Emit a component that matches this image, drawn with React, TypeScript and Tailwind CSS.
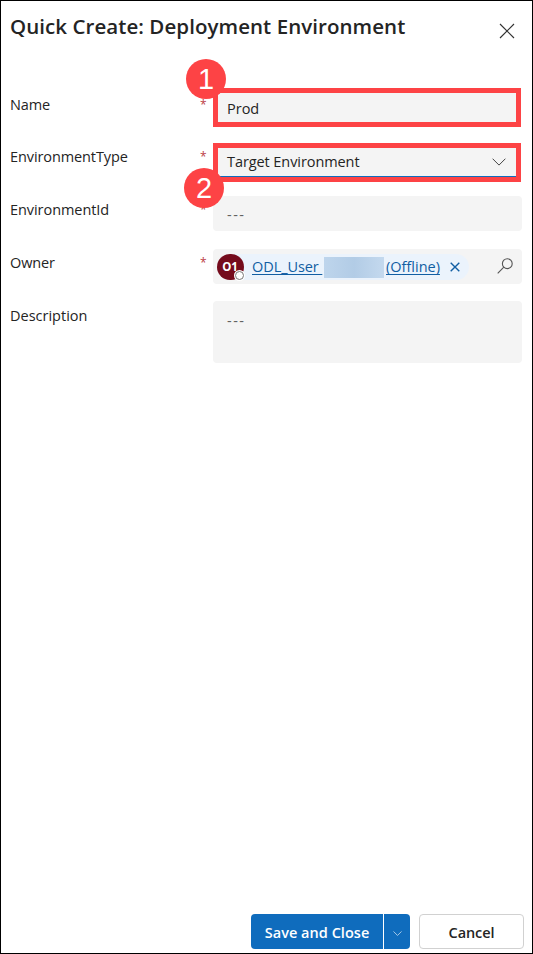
import React from "react";

type FieldRowProps = {
  label: string;
  tracking: string;
  pad: string;
  gap: string;
  required?: boolean;
  children: React.ReactNode;
};

function FieldRow({ label, tracking, pad, gap, required, children }: FieldRowProps) {
  return (
    <div className={`flex items-start ${gap}`}>
      <label className={`w-[190px] shrink-0 leading-5 ${pad} ${tracking}`}>{label}</label>
      <span className={`w-[13px] shrink-0 text-[12px] leading-5 text-[#bc4045] ${pad}`}>
        {required ? "*" : ""}
      </span>
      {children}
    </div>
  );
}

function Chevron({ className }: { className: string }) {
  return (
    <svg viewBox="0 0 14 8" fill="none" stroke="currentColor" className={className}>
      <path d="M.6.7 7 7.1 13.4.7" />
    </svg>
  );
}

function Badge({ n, place }: { n: number; place: string }) {
  return (
    <div
      className={`absolute z-10 flex size-10 items-center justify-center rounded-full bg-[#fd4345] font-['Liberation_Sans',sans-serif] text-[29px] leading-none text-white ${place}`}
    >
      {n}
    </div>
  );
}

export default function App() {
  return (
    <main className="relative flex h-[954px] w-[533px] flex-col border border-black bg-white font-['Open_Sans',sans-serif] text-[14.5px] text-[#242424]">
      <header className="flex h-[87px] items-start justify-between pl-[9px] pr-[17px] pt-[11px]">
        <h1 className="whitespace-nowrap text-[20.5px] font-semibold leading-7 tracking-[0.06px]">
          Quick Create: Deployment Environment
        </h1>
        <svg viewBox="0 0 16 16" fill="none" stroke="#333" strokeWidth="1.15" className="mt-[11px] size-4">
          <path d="m1 1 14 14M15 1 1 15" />
        </svg>
      </header>

      <section className="flex flex-col pl-[9px]">
        <FieldRow label="Name" tracking="tracking-[-0.1px]" pad="pt-[7px]" gap="mb-4" required>
          <div className="h-[39px] w-[308px] border-[5px] border-[#fd4345] bg-[#f4f4f4] pl-[9px] pt-[6px] leading-5">
            Prod
          </div>
        </FieldRow>

        <FieldRow label="EnvironmentType" tracking="tracking-[-0.1px]" pad="pt-[4px]" gap="mb-[14px]" required>
          <div className="h-[39px] w-[308px] border-[5px] border-[#fd4345] bg-[#f4f4f4]">
            <div className="flex h-[29px] items-start justify-between border-b border-[#0f6cbd] pl-[9px] pr-[10px] pt-1 leading-5">
              <span className="tracking-[-0.08px]">Target Environment</span>
              <Chevron className="mt-[6px] h-2 w-[14px] text-[#444]" />
            </div>
          </div>
        </FieldRow>

        <FieldRow label="EnvironmentId" tracking="tracking-[-0.06px]" pad="pt-[4px]" gap="mb-[18px]" required>
          <div className="h-[35px] w-[309px] rounded-[4px] bg-[#f4f4f4] pl-[14px] pt-[9px] leading-5 tracking-[1.5px] text-[#616161]">
            ---
          </div>
        </FieldRow>

        <FieldRow label="Owner" tracking="tracking-[-0.15px]" pad="pt-[4px]" gap="mb-[17px]" required>
          <div className="flex h-[35px] w-[309px] items-center justify-between rounded-[4px] bg-[#f4f4f4] pl-1 pr-[9px]">
            <div className="flex h-[26px] w-[252px] items-center rounded-full bg-[#ebf3fc] text-[#115ea3]">
              <span className="relative flex h-[26px] w-[27px] shrink-0 items-center justify-center rounded-full bg-[#750b1c] pr-px text-[11.5px] font-bold text-white">
                O1
                <i className="absolute -right-px bottom-[-1px] flex size-[11px] items-center justify-center rounded-full bg-white">
                  <i className="size-[9px] rounded-full border border-[#777]" />
                </i>
              </span>
              <a className="ml-[8px] flex items-center whitespace-nowrap leading-5 underline underline-offset-2 [text-decoration-skip-ink:none]">
                <span className="w-[72px] whitespace-pre tracking-[-0.08px]">ODL_User </span>
                <span className="mt-[2px] h-[21px] w-[60px] bg-linear-to-r from-[#bed5ec] via-[#b2cce6] to-[#c4d9ee]" />
                <span className="ml-[2px] w-[55px] tracking-[0px]">(Offline)</span>
              </a>
              <svg viewBox="0 0 10 10" fill="none" stroke="currentColor" strokeWidth="1.4" className="ml-[9px] size-[10px] shrink-0">
                <path d="m.7.7 8.6 8.6M9.3.7.7 9.3" />
              </svg>
            </div>
            <svg viewBox="0 0 16 16" fill="none" stroke="#555" strokeWidth="1.1" className="mb-px size-4">
              <circle cx="10.3" cy="5.7" r="4.9" />
              <path d="M6.8 9.2.7 15.3" />
            </svg>
          </div>
        </FieldRow>

        <FieldRow label="Description" tracking="tracking-[0px]" pad="pt-[5px]" gap="mb-0">
          <div className="h-[62px] w-[309px] rounded-[4px] bg-[#f4f4f4] pl-[14px] pt-[10px] leading-5 tracking-[1.5px] text-[#616161]">
            ---
          </div>
        </FieldRow>
      </section>

      <footer className="mb-1 mr-2 mt-auto flex h-[35px] justify-end gap-[9px] font-semibold">
        <div className="flex w-[159px] overflow-hidden rounded-[4px] bg-[#0f6cbd] text-white">
          <button className="w-[133px] whitespace-nowrap border-r border-white pt-[2px] tracking-[0.03px]">
            Save and Close
          </button>
          <button className="flex flex-1 items-center justify-center">
            <Chevron className="mt-[3px] h-[5px] w-[9px]" />
          </button>
        </div>
        <button className="w-[105px] rounded-[4px] border border-[#d1d1d1] bg-white pt-[2px] tracking-[-0.1px]">
          Cancel
        </button>
      </footer>

      <Badge n={1} place="left-[185px] top-[58px]" />
      <Badge n={2} place="left-[183px] top-[167px]" />
    </main>
  );
}
